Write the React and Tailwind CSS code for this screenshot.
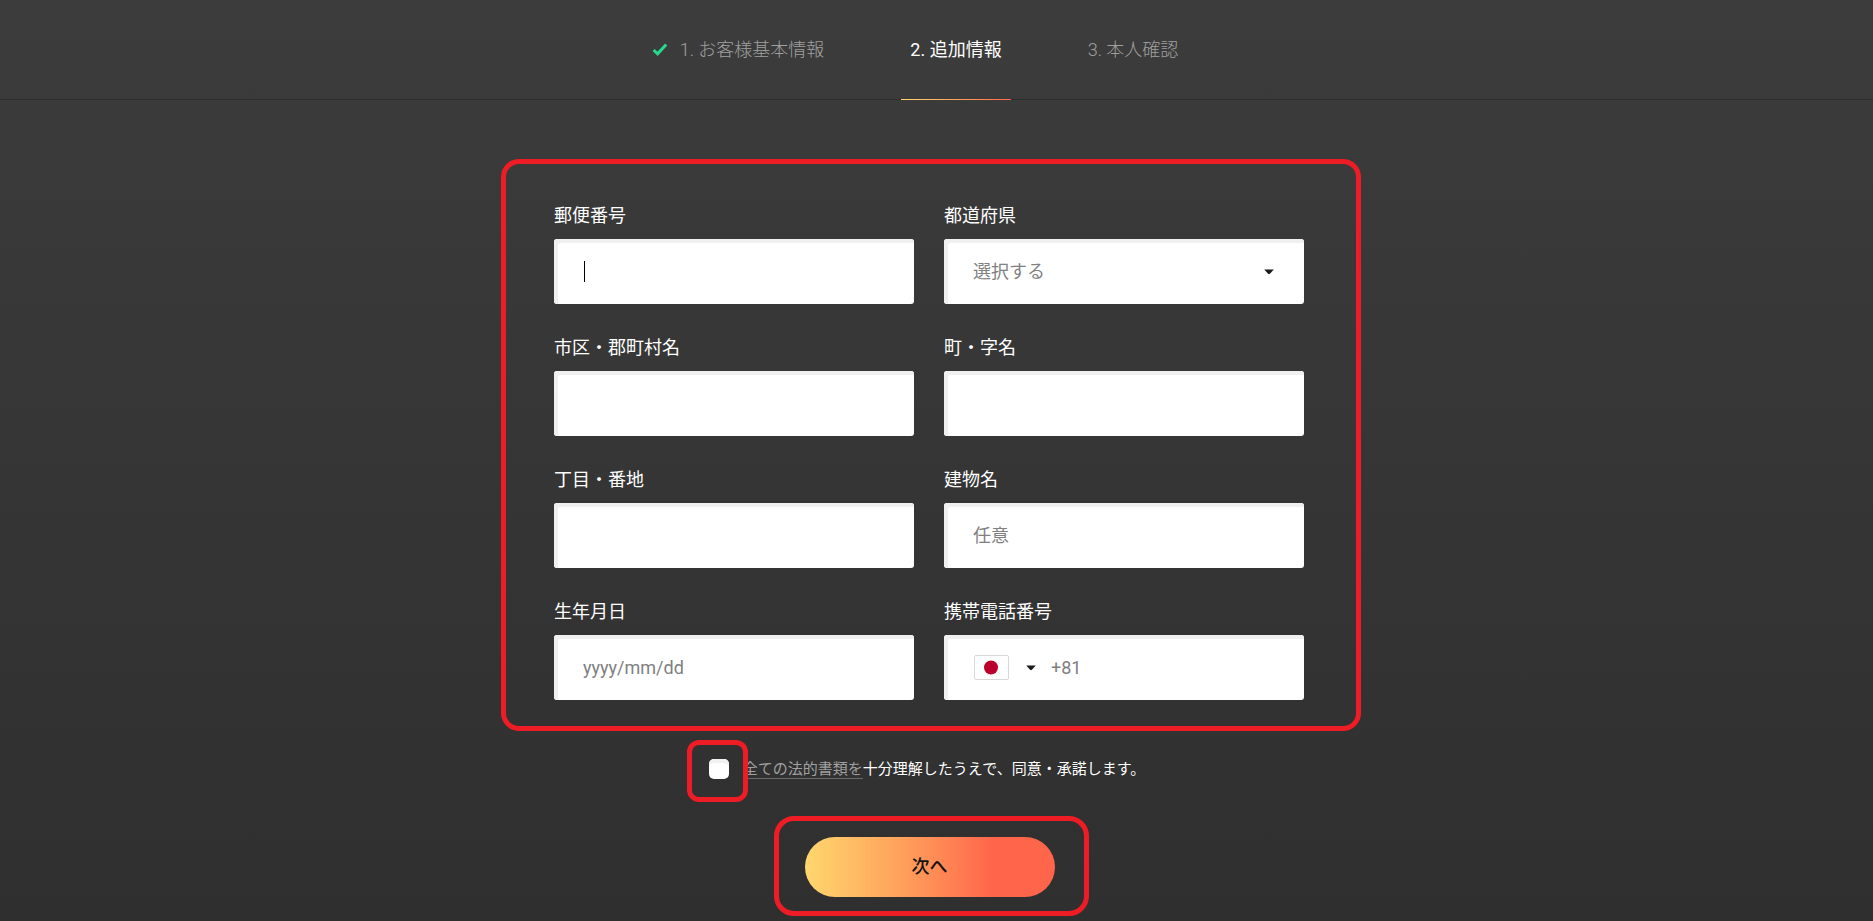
import { useState } from "react";
import clsx from "clsx";

const STEPS = [
    { id: 1, label: "お客様基本情報", done: true },
    { id: 2, label: "追加情報", active: true },
    { id: 3, label: "本人確認" },
];

const FIELD =
    "h-[65px] w-full rounded-[3px] bg-white text-lg shadow-[inset_4px_4px_0_#f0f0f0] outline-none placeholder:text-[#808080]";

const CheckMark = () => (
    <svg width="16" height="14" viewBox="0 0 16 14" fill="none" aria-hidden="true">
        <path d="M1.6 7 L5.6 10.8 L14.2 1.4" stroke="#27d98b" strokeWidth="3" />
    </svg>
);

const Caret = () => (
    <svg width="10" height="6" viewBox="0 0 10 6" aria-hidden="true">
        <path d="M0.2 0.5 H9.8 L5.9 4.8 Q5 5.7 4.1 4.8 Z" fill="#1c1c1c" />
    </svg>
);

const JapanFlag = () => (
    <svg width="35" height="25" viewBox="0 0 35 25" aria-hidden="true">
        <rect x="0.5" y="0.5" width="34" height="24" rx="1.5" fill="#fff" stroke="#d8d8d8" />
        <circle cx="17" cy="12.5" r="7" fill="#bc002d" />
    </svg>
);

const Steps = () => (
    <nav className="flex h-[100px] justify-center gap-[68px] border-b border-[#2e2e2e] pr-[43px] text-lg">
        {STEPS.map((step) => (
            <div
                key={step.id}
                className={clsx(
                    "relative flex h-[99px] items-center gap-3 px-[9px]",
                    step.active ? "font-normal text-white" : "font-light text-[#a0a0a0]",
                )}
            >
                {step.done && <CheckMark />}
                <span>
                    {step.id}. {step.label}
                </span>
                {step.active && (
                    <span className="absolute inset-x-0 -bottom-px h-px bg-linear-to-r from-[#ffd76e] to-[#ff654b]" />
                )}
            </div>
        ))}
    </nav>
);

const Field = ({ id, label, children }) => (
    <div>
        <label htmlFor={id} className="mb-[11px] block text-lg leading-6 text-white">
            {label}
        </label>
        {children}
    </div>
);

const TextInput = ({ id, placeholder }) => (
    <input id={id} type="text" placeholder={placeholder} className={clsx(FIELD, "px-[29px]")} />
);

export default function App() {
    const [prefecture, setPrefecture] = useState("");
    const [agreed, setAgreed] = useState(false);

    return (
        <div className="min-h-screen bg-linear-to-b from-[#3c3c3c] to-[#2f2f2f] font-[Roboto,'Noto_Sans_CJK_JP',sans-serif]">
            <Steps />

            <form
                className="flex flex-col items-center pt-[59px] pr-[11px]"
                onSubmit={(e) => e.preventDefault()}
            >
                <div className="grid w-full max-w-[860px] grid-cols-2 gap-x-[30px] gap-y-8 rounded-[18px] border-[5px] border-[#ee1c25] pt-10 pr-[52px] pb-[26px] pl-12">
                    <Field id="postcode" label="郵便番号">
                        <div className="relative">
                            <input
                                id="postcode"
                                type="text"
                                autoFocus
                                className={clsx(FIELD, "px-[29px] caret-transparent")}
                            />
                            <span className="absolute top-[22px] left-[30px] h-[21px] w-px bg-black" />
                        </div>
                    </Field>

                    <Field id="prefecture" label="都道府県">
                        <div className="relative">
                            <select
                                id="prefecture"
                                value={prefecture}
                                onChange={(e) => setPrefecture(e.target.value)}
                                className={clsx(FIELD, "appearance-none px-[29px] text-[#808080]")}
                            >
                                <option value="">選択する</option>
                            </select>
                            <span className="pointer-events-none absolute inset-y-0 right-[30px] flex items-center">
                                <Caret />
                            </span>
                        </div>
                    </Field>

                    <Field id="city" label="市区・郡町村名">
                        <TextInput id="city" />
                    </Field>
                    <Field id="town" label="町・字名">
                        <TextInput id="town" />
                    </Field>
                    <Field id="block" label="丁目・番地">
                        <TextInput id="block" />
                    </Field>
                    <Field id="building" label="建物名">
                        <TextInput id="building" placeholder="任意" />
                    </Field>
                    <Field id="birthday" label="生年月日">
                        <TextInput id="birthday" placeholder="yyyy/mm/dd" />
                    </Field>

                    <Field id="phone" label="携帯電話番号">
                        <div className={clsx(FIELD, "flex items-center gap-[15px] px-[30px]")}>
                            <button
                                type="button"
                                aria-label="国番号"
                                className="flex items-center gap-[17px]"
                            >
                                <JapanFlag />
                                <Caret />
                            </button>
                            <input
                                id="phone"
                                type="tel"
                                placeholder="+81"
                                className="min-w-0 flex-1 bg-transparent outline-none placeholder:text-[#808080]"
                            />
                        </div>
                    </Field>
                </div>

                <div className="mt-[9px] flex items-center pr-[30px]">
                    <div className="z-10 rounded-xl border-[5px] border-[#ee1c25] pt-[14px] pr-[14px] pb-[18px] pl-[17px]">
                        <input
                            id="agree"
                            type="checkbox"
                            checked={agreed}
                            onChange={(e) => setAgreed(e.target.checked)}
                            className="block size-5 appearance-none rounded-[5px] bg-white shadow-[inset_0_4px_0_#f3f0f3] checked:bg-[#ff654b]"
                        />
                    </div>
                    <label htmlFor="agree" className="-ml-[5px] pb-1 text-[15px] leading-5 text-white">
                        <a href="#" className="border-b border-[#6a6a6a] text-[#a0a0a0]">
                            全ての法的書類を
                        </a>
                        十分理解したうえで、同意・承諾します。
                    </label>
                </div>

                <div className="mt-[14px] rounded-[20px] border-[5px] border-[#ee1c25] pt-4 pr-[29px] pb-[14px] pl-[26px]">
                    <button
                        type="submit"
                        className="h-[60px] w-[250px] rounded-full bg-linear-to-r from-[#ffd76e] to-[#ff654b] to-75% text-lg font-medium text-[#141414]"
                    >
                        次へ
                    </button>
                </div>
            </form>
        </div>
    );
}
